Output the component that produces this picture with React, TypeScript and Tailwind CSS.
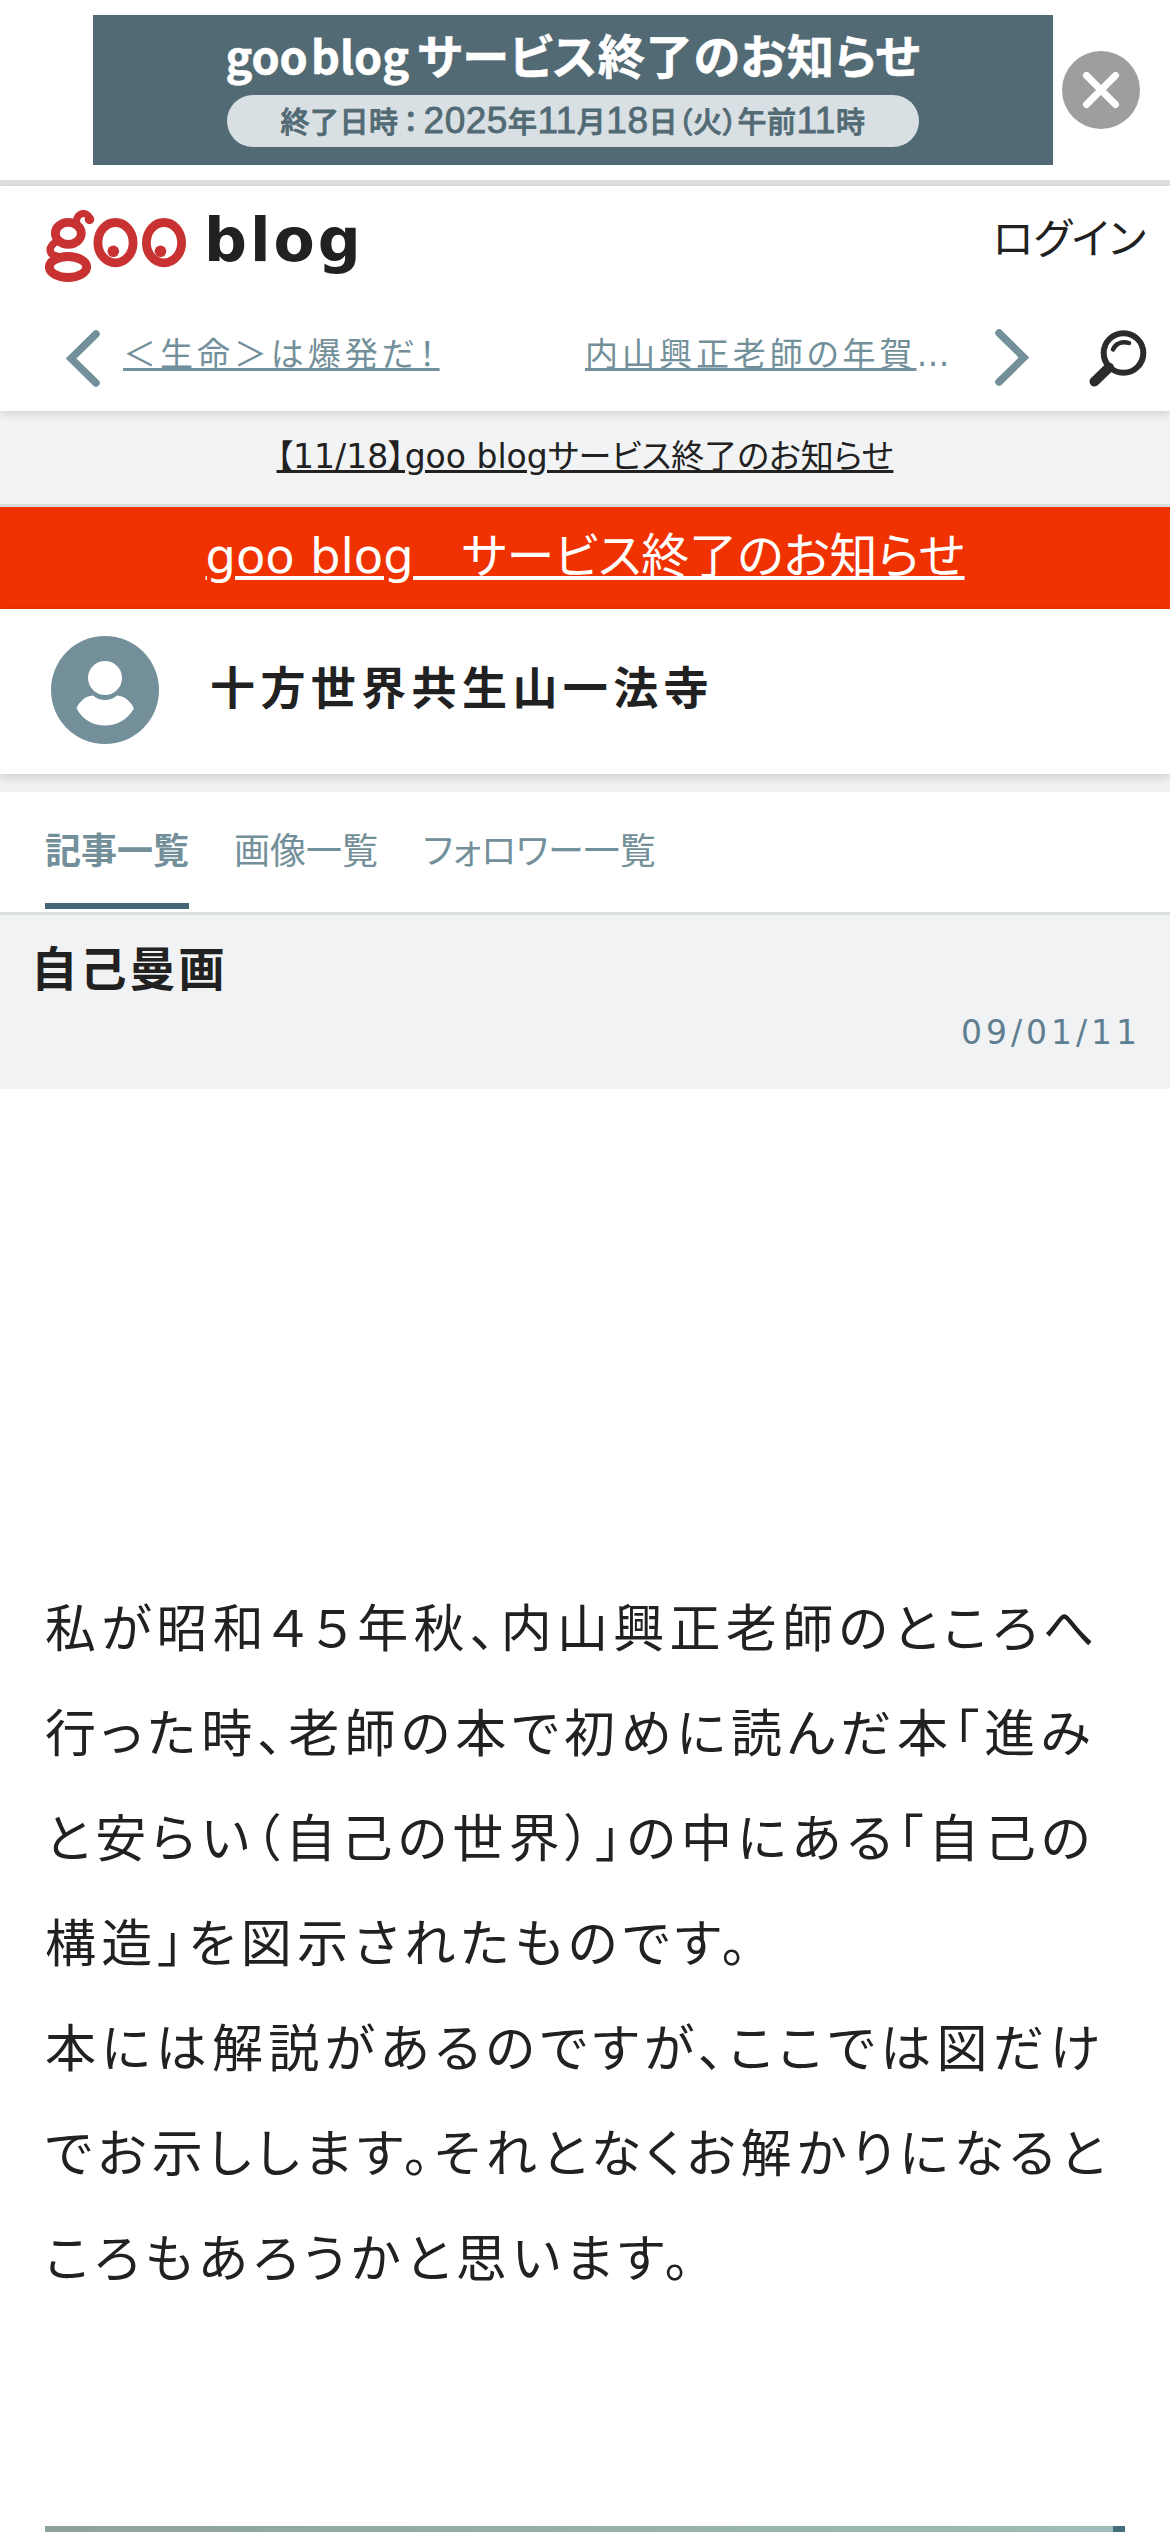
import { useState } from "react";

const tabs = ["記事一覧", "画像一覧", "フォロワー一覧"];

function GooLogo() {
  return (
    <svg
      className="h-[72px] w-[141px]"
      viewBox="0 0 141 72"
      fill="none"
      stroke="#c83232"
      strokeWidth="8.8"
      strokeLinecap="round"
    >
      <ellipse cx="23.300" cy="23.300" rx="13" ry="11" />
      <path d="M31.500 12C31 3.500 40 0 45 8" strokeWidth="7" />
      <path d="M12 31.500C2.500 36.500 3 45 13 46.500" strokeWidth="7.5" />
      <ellipse cx="23" cy="57" rx="18.700" ry="10.500" />
      <ellipse cx="70.500" cy="32.700" rx="17.600" ry="20.200" />
      <ellipse cx="119" cy="32.700" rx="17.600" ry="20.200" />
      <g fill="#c83232" stroke="none">
        <circle cx="44.500" cy="9.500" r="4.700" />
        <circle cx="68.300" cy="41.300" r="5.800" />
        <circle cx="115.500" cy="41.300" r="5.800" />
      </g>
    </svg>
  );
}

function CloseIcon() {
  return (
    <svg className="size-[78px]" viewBox="0 0 78 78">
      <circle cx="39" cy="39" r="39" fill="#9e9e9e" />
      <path
        d="M24.500 24.500L53.500 53.500M53.500 24.500L24.500 53.500"
        stroke="#fff"
        strokeWidth="7"
        strokeLinecap="round"
      />
    </svg>
  );
}

function Chevron({ className = "" }: { className?: string }) {
  return (
    <svg className={`h-[57px] w-[34px] ${className}`} viewBox="0 0 34 57">
      <path
        d="M30 4L5 28.500L30 53"
        fill="none"
        stroke="#73909a"
        strokeWidth="7.500"
        strokeLinecap="round"
      />
    </svg>
  );
}

function SearchIcon() {
  return (
    <svg
      className="h-[57px] w-[58px]"
      viewBox="0 0 58 57"
      fill="none"
      stroke="#2b2b2b"
      strokeLinecap="round"
    >
      <circle cx="34.500" cy="23" r="19.800" strokeWidth="6" />
      <path d="M24 19.500C26 14 33 10.500 40 13" strokeWidth="4.500" />
      <path d="M5.500 51.500L20 37.500" strokeWidth="10" />
    </svg>
  );
}

function Avatar() {
  return (
    <svg className="size-[108px]" viewBox="0 0 108 108">
      <circle cx="54" cy="54" r="54" fill="#73909a" />
      <circle cx="54" cy="42" r="17" fill="#fff" />
      <path
        d="M42 59.500C49 65.500 59 65.500 66 59.500C74 60 80 66 83 72.500C76 84 66 89.500 54 89.500C42 89.500 32 84 25.500 72.500C28 66 34 60 42 59.500Z"
        fill="#fff"
      />
    </svg>
  );
}

function TopBanner({ onClose }: { onClose: () => void }) {
  return (
    <div className="flex h-[186px] items-start border-b-6 border-[#e0e0e0] pt-[15px] pl-[93px]">
      <div className="flex h-[150px] w-[960px] flex-col items-center bg-[#526a74] font-['Noto_Sans_CJK_JP',sans-serif]">
        <p className="mt-[6px] flex h-[66px] items-baseline text-[47px] leading-[66px] font-bold whitespace-nowrap text-white [-webkit-text-stroke:0.6px_#fff]">
          <span className="mr-[8px] text-[45px] [word-spacing:-7px]">
            goo blog
          </span>
          <span className="tracking-[0.8px]">サービス終了のお知らせ</span>
        </p>
        <p className="mt-[8px] h-[52px] w-[692px] rounded-full bg-[#d9e0e4] text-center font-['Liberation_Sans','Noto_Sans_CJK_JP',sans-serif] text-[37px] leading-[52px] font-medium tracking-[0.5px] whitespace-nowrap text-[#526a74] [-webkit-text-stroke:0.8px_#526a74]">
          <span className="text-[29px]">終了日時</span>
          <span className="mr-[5px] ml-[5px] text-[29px]">：</span>2025
          <span className="text-[29px]">年</span>11
          <span className="text-[29px]">月</span>18
          <span className="text-[29px]">日（火）午前</span>11
          <span className="text-[29px]">時</span>
        </p>
      </div>
      <button className="mt-[36px] ml-[9px] cursor-pointer" onClick={onClose}>
        <CloseIcon />
      </button>
    </div>
  );
}

function Header() {
  return (
    <header className="relative h-[225px] bg-white shadow-[0_3px_9px_rgba(0,0,0,0.15)]">
      <div className="flex h-[120px] items-start justify-between pr-[24px] pl-[45px]">
        <div className="flex items-start pt-[24px]">
          <GooLogo />
          <span className="ml-[18px] text-[60px] leading-[60px] font-bold tracking-[0.05em]">
            blog
          </span>
        </div>
        <a className="mt-[24px] text-[42px] leading-[60px]">ログイン</a>
      </div>
      <nav className="flex items-start text-[33px] leading-[48px] tracking-[0.12em] text-[#73909a]">
        <Chevron className="mt-[24px] ml-[66px]" />
        <a className="mt-[25px] ml-[23px] w-[462px] underline">
          ＜生命＞は爆発だ！
        </a>
        <p className="mt-[25px] w-[410px]">
          <a className="underline">内山興正老師の年賀</a>…
        </p>
        <Chevron className="mt-[23px] rotate-180" />
        <span className="mt-[24px] ml-[60px]">
          <SearchIcon />
        </span>
      </nav>
    </header>
  );
}

export default function App() {
  const [bannerOpen, setBannerOpen] = useState(true);
  const [activeTab, setActiveTab] = useState(tabs[0]);

  return (
    <div className="h-[2532px] w-[1170px] overflow-hidden bg-white font-['DejaVu_Sans','Noto_Sans_CJK_JP',sans-serif] text-[#212121] [font-feature-settings:'palt']">
      {bannerOpen && <TopBanner onClose={() => setBannerOpen(false)} />}
      <Header />

      {/* service notices */}
      <div className="h-[96px] border-b-3 border-[#dadddf] bg-[#f1f3f5] pt-[22px] text-center text-[33px] leading-[48px]">
        <a className="underline">【11/18】goo blogサービス終了のお知らせ</a>
      </div>
      <div className="h-[102px] bg-[#f03200] pt-[13px] text-center text-[48px] leading-[72px] text-white">
        <a className="underline">goo blog　サービス終了のお知らせ</a>
      </div>

      {/* blog owner */}
      <div className="bg-[#eff1f2] pb-[18px]">
        <div className="flex h-[165px] items-start bg-white pt-[27px] pl-[51px] shadow-[0_3px_9px_rgba(0,0,0,0.15)]">
          <Avatar />
          <h1 className="mt-[18px] ml-[51px] text-[45px] leading-[72px] font-bold tracking-[0.12em]">
            十方世界共生山一法寺
          </h1>
        </div>
      </div>

      <div className="relative flex h-[123px] gap-[45px] border-b-3 border-[#d9dedf] bg-white pl-[45px] text-[36px] text-[#73909a]">
        {tabs.map((tab) => (
          <button
            key={tab}
            onClick={() => setActiveTab(tab)}
            className={
              tab === activeTab
                ? "h-[117px] cursor-pointer border-b-6 border-[#446677] pt-[8px] font-bold"
                : "h-[117px] cursor-pointer border-b-6 border-transparent pt-[8px]"
            }
          >
            {tab}
          </button>
        ))}
      </div>

      {/* article */}
      <div className="h-[174px] bg-[#f0f2f4] pt-[19px] pr-[29px] pl-[31px]">
        <h2 className="text-[46.5px] leading-[72px] font-bold tracking-[2.6px]">
          自己曼画
        </h2>
        <p className="mt-[3px] text-right text-[33px] leading-[48px] tracking-[0.12em] text-[#5f7f90]">
          09/01/11
        </p>
      </div>
      <article className="px-[45px] pt-[488px] text-[51px] leading-[105px] tracking-[5.3px]">
        <p>
          私が昭和４５年秋、内山興正老師のところへ行った時、老師の本で初めに読んだ本「進みと安らい（自己の世界）」の中にある「自己の構造」を図示されたものです。
          <br />
          本には解説があるのですが、ここでは図だけでお示しします。それとなくお解かりになるところもあろうかと思います。
        </p>
        <div className="mt-[214px] h-[300px] border-r-12 border-[#456d7a] bg-linear-to-r from-[#8ca39b] to-[#9fbdb8]" />
      </article>
    </div>
  );
}
